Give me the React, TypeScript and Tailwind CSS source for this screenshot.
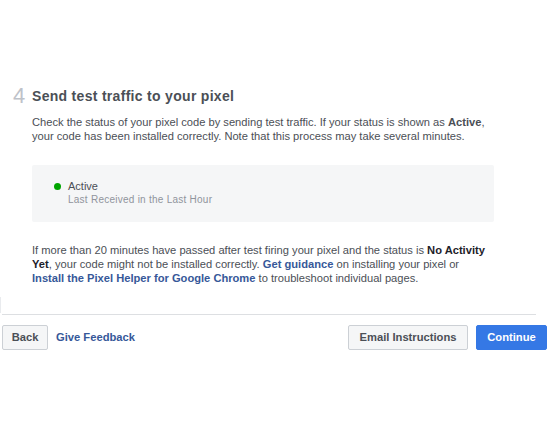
import React from "react";

export default function App() {
  return (
    <div
      className="w-[557px] h-[427px] bg-white overflow-hidden relative"
      style={{ fontFamily: '"Liberation Sans", Arial, sans-serif' }}
    >
      <div className="absolute left-0 top-[297px] w-px h-[16px] bg-[#e9ebee]" />
      <div className="pt-[84px] pl-[2px] w-[547px]">
        <div className="pl-[11px] flex items-center h-[24px]">
          <span className="w-[19px] text-[22px] leading-none text-[#bec2c9]">4</span>
          <span className="text-[14px] font-bold text-[#4b4f56] tracking-[0.3px]">
            Send test traffic to your pixel
          </span>
        </div>
        <div className="pl-[30px] pr-[51px] mt-[7px]">
          <p className="text-[11.15px] leading-[14px] text-[#4b4f56] w-[462px]">
            Check the status of your pixel code by sending test traffic. If your status is shown as{" "}
            <b>Active</b>, your code has been installed correctly. Note that this process may take
            several minutes.
          </p>
          <div className="mt-[22px] w-[462px] h-[57px] bg-[#f5f6f7] rounded-[2px] pl-[22px] pt-[14px]">
            <div className="flex items-center h-[14px]">
              <span className="w-[7px] h-[7px] rounded-full bg-[#00a400] mr-[7px]" />
              <span className="text-[11px] text-[#4b4f56]">Active</span>
            </div>
            <div className="pl-[14px] text-[10px] leading-[14px] text-[#90949c] tracking-[0.25px]">
              Last Received in the Last Hour
            </div>
          </div>
          <p className="mt-[21px] text-[11.15px] leading-[14px] text-[#4b4f56] w-[462px]">
            If more than 20 minutes have passed after test firing your pixel and the status is{" "}
            <b className="text-[#1d2129]">No Activity Yet</b>, your code might not be installed
            correctly. <b className="text-[#365899]">Get guidance</b> on installing your pixel or{" "}
            <b className="text-[#365899]">Install the Pixel Helper for Google Chrome</b> to
            troubleshoot individual pages.
          </p>
        </div>
        <div className="mt-[29px] h-px w-[534px] bg-[#dddfe2]" />
        <div className="mt-[10px] flex items-center">
          <button className="h-[25px] w-[46px] bg-[#f5f6f7] border border-[#ccd0d5] rounded-[2px] text-[11.2px] font-bold text-[#4b4f56]">
            Back
          </button>
          <span className="ml-[8px] text-[11.2px] font-bold text-[#365899]">Give Feedback</span>
          <div className="flex-1" />
          <button className="h-[25px] w-[120px] bg-[#f5f6f7] border border-[#ccd0d5] rounded-[2px] text-[11.2px] font-bold text-[#4b4f56]">
            Email Instructions
          </button>
          <button className="ml-[8px] h-[25px] w-[71px] bg-[#3578e5] border border-[#3578e5] rounded-[2px] text-[11.2px] font-bold text-white">
            Continue
          </button>
        </div>
      </div>
    </div>
  );
}
